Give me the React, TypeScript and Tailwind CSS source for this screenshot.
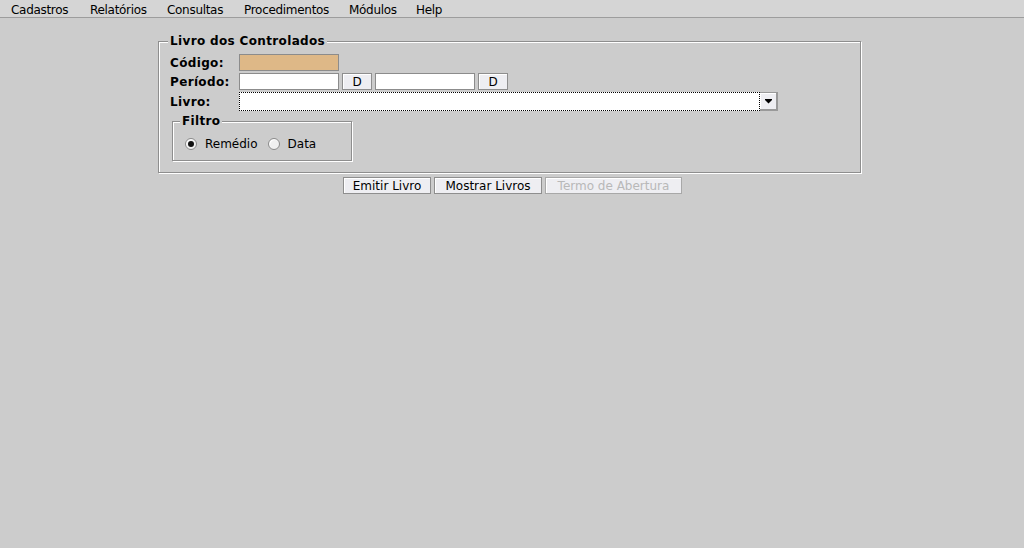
import React from "react";

const menus: { label: string; w: string }[] = [
  { label: "Cadastros", w: "w-[79px]" },
  { label: "Relatórios", w: "w-[77px]" },
  { label: "Consultas", w: "w-[77px]" },
  { label: "Procedimentos", w: "w-[105px]" },
  { label: "Módulos", w: "w-[67px]" },
  { label: "Help", w: "w-[40px]" },
];

function Btn({ children, w, disabled }: { children: React.ReactNode; w: string; disabled?: boolean }) {
  return (
    <button
      type="button"
      className={`${w} h-[17px] flex items-center justify-center border ${
        disabled ? "border-[#a8a8a8] text-[#b8b8b8]" : "border-[#8e8e8e] text-black"
      } bg-[#eeeef2] shadow-[inset_1px_1px_0_#ffffff] leading-none text-[12px]`}
    >
      {children}
    </button>
  );
}

function Radio({ checked, label }: { checked?: boolean; label: string }) {
  return (
    <div className="flex items-center">
      <span className="w-[12px] h-[12px] rounded-full border border-[#8a8a8a] bg-[#f0f0f0] shadow-[inset_1px_1px_1px_#ffffff] flex items-center justify-center">
        {checked && <span className="w-[6px] h-[6px] rounded-full bg-[#111111]" />}
      </span>
      <span className="ml-[8px] leading-none">{label}</span>
    </div>
  );
}

export default function App() {
  return (
    <div className="w-[1024px] h-[548px] bg-[#cccccc] text-[12px] text-black font-['DejaVu_Sans',_'Liberation_Sans',_sans-serif] overflow-hidden">
      {/* menu bar */}
      <div className="h-[18px] bg-[#d5d5d5] border-b border-[#9d9d9d] flex items-center pl-[11px]">
        {menus.map((m) => (
          <div key={m.label} className={`${m.w} leading-none pt-[2px] tracking-[-0.3px]`}>
            {m.label}
          </div>
        ))}
      </div>

      {/* group box */}
      <fieldset className="ml-[158px] mt-[16px] w-[703px] border border-[#8e8e8e] shadow-[1px_1px_0_#ffffff,inset_1px_1px_0_#ffffff] pl-[9px] pb-[11px]">
        <legend className="px-[2px] font-bold leading-[15px] bg-[#cccccc] tracking-[0.35px]">Livro dos Controlados</legend>
        <div className="pl-[2px]">
          <div className="mt-[5px] h-[17px] flex items-center">
            <span className="w-[69px] font-bold leading-none tracking-[0.35px]">Código:</span>
            <div className="w-[100px] h-[17px] border border-[#8c8c8c] bg-[#deb887]" />
          </div>
          <div className="mt-[2px] h-[17px] flex items-center">
            <span className="w-[69px] font-bold leading-none tracking-[0.35px]">Período:</span>
            <div className="w-[100px] h-[17px] border border-[#8c8c8c] bg-white" />
            <div className="ml-[3px]">
              <Btn w="w-[30px]">D</Btn>
            </div>
            <div className="ml-[3px] w-[100px] h-[17px] border border-[#8c8c8c] bg-white" />
            <div className="ml-[3px]">
              <Btn w="w-[30px]">D</Btn>
            </div>
          </div>
          <div className="mt-[2px] h-[19px] flex items-center">
            <span className="w-[69px] font-bold leading-none tracking-[0.35px]">Livro:</span>
            <div className="w-[539px] h-[19px] flex">
              <div className="flex-1 h-[19px] border border-dotted border-black bg-white" />
              <div className="w-[18px] h-[19px] border-t border-[#999999] border-r-2 border-b-2 bg-[#eeeef2] shadow-[inset_1px_1px_0_#ffffff] flex items-center justify-center">
                <svg width="7" height="5" viewBox="0 0 7 5">
                  <rect x="0" y="0" width="7" height="1" fill="#000" />
                  <path d="M0 1 H7 L3.5 4.5 Z" fill="#000" />
                </svg>
              </div>
            </div>
          </div>
        </div>

        {/* Filtro */}
        <fieldset className="ml-[4px] mt-[3px] w-[180px] border border-[#8e8e8e] shadow-[1px_1px_0_#ffffff,inset_1px_1px_0_#ffffff] pl-[7px] pb-[8px]">
          <legend className="px-[2px] font-bold leading-[15px] bg-[#cccccc] tracking-[0.35px]">Filtro</legend>
          <div className="ml-[5px] mt-[7px] h-[16px] flex items-center">
            <Radio checked label="Remédio" />
            <div className="ml-[10px]">
              <Radio label="Data" />
            </div>
          </div>
        </fieldset>
      </fieldset>

      {/* buttons */}
      <div className="mt-[4px] flex pl-[343px] gap-[3px]">
        <Btn w="w-[88px]">Emitir Livro</Btn>
        <Btn w="w-[108px]">Mostrar Livros</Btn>
        <Btn w="w-[137px]" disabled>
          Termo de Abertura
        </Btn>
      </div>
    </div>
  );
}
